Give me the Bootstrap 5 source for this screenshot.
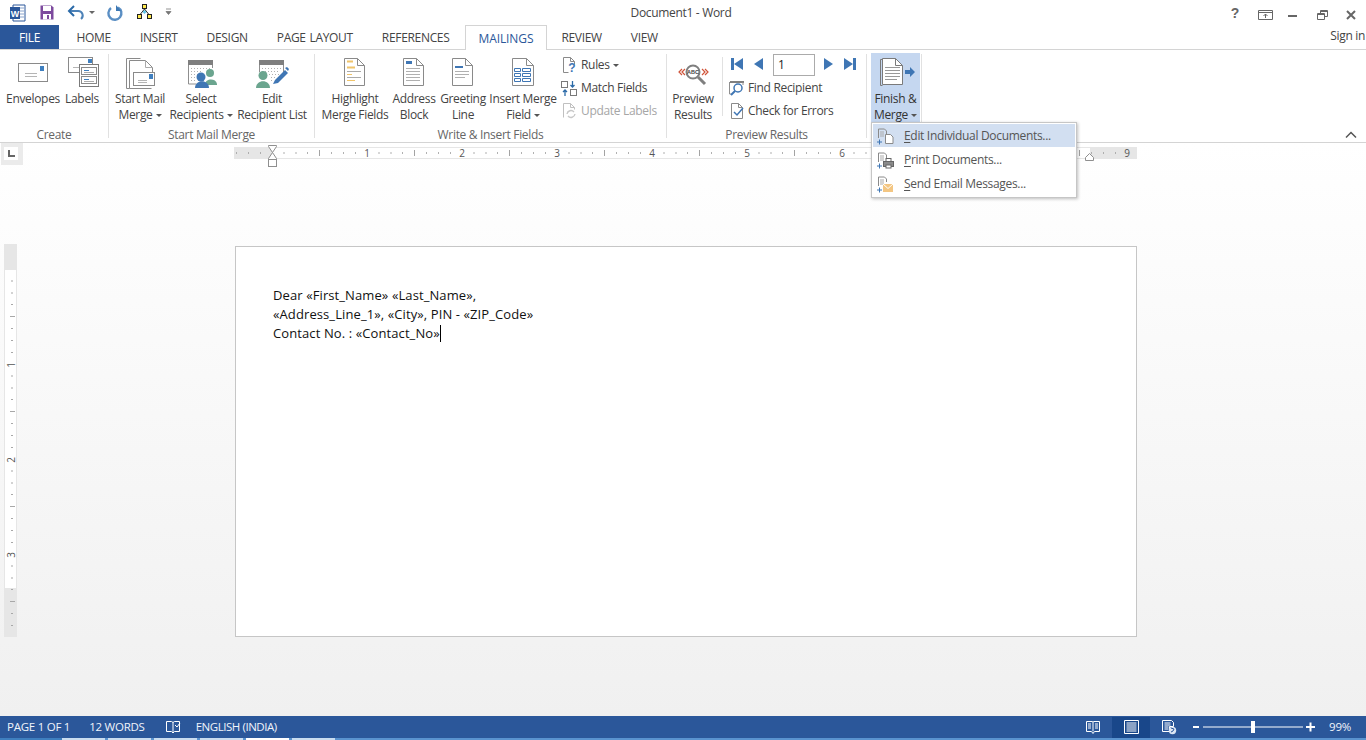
<!DOCTYPE html>
<html lang="en"><head><meta charset="utf-8"><title>Document1 - Word</title>
<link href="https://cdn.jsdelivr.net/npm/bootstrap@5.3.0/dist/css/bootstrap.min.css" rel="stylesheet">
<style>
html,body{height:740px;overflow:hidden;background:#fff}
body{font-family:"Open Sans","Liberation Sans",sans-serif;font-size:12px;letter-spacing:-.32px;color:#444;line-height:16px}
svg{display:block;flex:none;letter-spacing:0}
.wd-app{height:740px}
.wd-title{height:25px;flex:none}
.wd-side{flex:1 1 0}
.wd-qat{padding-left:9px;gap:0}
.wd-ctrl{padding-right:1px;justify-content:flex-end}
.wd-doctitle{padding-right:12px}
.wd-tabs{height:25px;flex:none;border-bottom:1px solid #d4d4d4;flex-wrap:nowrap}
.wd-tabs .nav-link{padding:0 14.5px;height:25px;line-height:25px;color:#444;font-size:12px;border:0;white-space:nowrap;word-spacing:1px}
.wd-tabs .wd-file{background:#2b579a;color:#fff;width:59px;padding:0;text-align:center;height:24px;border:0;margin-right:3px}
.wd-tabs .active{background:#fff;color:#2b579a;border:1px solid #d4d4d4;border-bottom:0;height:25px;padding:0 12.5px;margin-left:1px;letter-spacing:-.1px}
.wd-sign{margin-left:auto;line-height:21px;padding-right:1px;align-self:flex-start}
.wd-ribbon{height:93px;flex:none;border-bottom:1px solid #d4d4d4;position:relative;padding-top:3px}
.wd-grp{height:85px;flex:none;display:flex;flex-direction:column;position:relative}
.wd-grp::after{content:"";position:absolute;right:0;top:1px;bottom:0;width:1px;background:#e1e1e1}
.wd-gbody{height:70px;flex:none;display:flex}
.wd-glabel{text-align:center;color:#666;line-height:16px;margin-top:3.5px;padding-right:1px}
.g1{width:109px;padding-left:4px}.g1 .wd-glabel{margin-left:-4px}
.g2{width:206px}.g3{width:352px}.g4{width:200px}.g5{width:55px}
.wd-big{display:flex;flex:none;flex-direction:column;align-items:center;text-align:center;white-space:nowrap;color:#444;border:0;background:none;padding:0;letter-spacing:-.32px;font-size:12px;line-height:16px}
.wb40{width:40px}.wb44{width:44px}.wb52{width:52px}.wb54{width:54px}.wb56{width:56px}.wb58{width:58px}.wb66{width:66px}.wb74{width:74px}.wb76{width:76px}
.wd-pl3{padding-left:3px}
.wd-cr{display:inline-block;width:0;height:0;border:3px solid transparent;border-top-color:#555;border-bottom:0;vertical-align:2px;margin-left:3px}
.wd-small{display:flex;flex-direction:column;margin-left:5px}
.wd-small.wd-nomg{margin-left:0}
.wd-srow{height:23px;display:flex;align-items:center;gap:3px;white-space:nowrap}
.wd-off{color:#a6a6a6}
.wd-vsep{width:1px;height:59px;background:#e1e1e1;margin:4px 4px 0 3px;flex:none}
.wd-navrow{height:23px;display:flex;align-items:center}
.wd-inp{width:42px;height:22px;border:1px solid #ababab;color:#222;padding:0 4px;line-height:20px;margin:0 9px 0 2px;font-size:12px}
.wd-finish{margin-left:4px;width:49px;height:69px;background:#c5d7f0;color:#333}
.wd-menu{position:absolute;left:871px;top:72px;width:206px;height:76px;min-width:0;padding:1px;border:1px solid #c6c6c6;border-radius:0;box-shadow:1px 1px 3px rgba(0,0,0,.25);background:#fff;margin:0;font-size:12px;z-index:5}
.wd-menu .dropdown-item{height:24px;padding:0 0 0 3px;display:flex;align-items:center;gap:10px;color:#555;font-size:12px;line-height:16px;background:none}
.wd-menu .dropdown-item.active{background:#d2dff1;color:#555;height:23px;margin-bottom:1px}
.wd-menu u{text-underline-offset:2px}
.wd-collapse{position:absolute;right:9px;bottom:3px}
.wd-work{flex:1 1 0;min-height:0;background:linear-gradient(#fff 0,#fcfcfc 120px,#f0f0f0 100%);display:flex;flex-direction:column}
.wd-hr{height:24px;flex:none;display:flex}
.wd-corner{width:22px;height:22px;background:#ebebeb;margin-left:1px;padding:4px 5px 5px 3px;flex:none}
.wd-corner div{width:14px;height:13px;background:#fff;display:flex;align-items:center;justify-content:center}
.wd-hrbar{margin-left:211px}
.wd-docrow{display:flex;padding-top:79px}
.wd-vr{margin:-2px 0 0 4px;flex:none}
.wd-page{width:902px;height:391px;margin-left:217px;background:#fff;border:1px solid #c6c6c6;padding:39px 0 0 37px;font-size:13px;line-height:19px;color:#111;letter-spacing:.1px}
.wd-page p{margin:0}
.wd-caret{display:inline-block;width:1px;height:17px;background:#000;vertical-align:-4px;margin-left:0}
.wd-status{height:22px;flex:none;background:#2b579a;color:#f0f4fa;font-size:11.5px;letter-spacing:-.25px;padding-left:7px}
.wd-st{white-space:nowrap}
.wd-lang{letter-spacing:-.45px}
.wd-m19{margin-left:19px}.wd-m20{margin-left:20px}.wd-m15{margin-left:15px}.wd-mx14{margin:0 15px 0 14px}
.wd-pview{width:38px;height:21px;background:#19478a;display:flex;align-items:center;justify-content:center;margin:0 12px 0 12px}
.wd-strip{height:2px;flex:none;display:flex;background:#5a93cf}
.wd-strip i{display:block;width:43px;margin-right:3px;background:#c9dcef}
.wd-strip i.wd-w{background:#fff}
.wd-strip b{display:block;width:62px;background:#3f7fbf}
</style></head><body>
<div class="wd-app d-flex flex-column">
 <div class="wd-title d-flex align-items-center">
  <div class="wd-side d-flex align-items-center wd-qat">
   <svg width="175" height="24" viewBox="9 0 175 24"><path d="M13 4h12v16H13z" fill="#fff" stroke="#2b579a"/><path d="M19 7h5M19 10h5M19 13h5M19 16h5" stroke="#8aa4cc"/><rect x="10" y="6" width="10" height="12" fill="#2b579a"/><text x="15" y="15.5" font-family="Liberation Sans" font-size="9" font-weight="700" fill="#fff" text-anchor="middle">W</text>
    <path d="M40.500 4.500h11l2 2v12h-13z" fill="#7d4a9e"/><rect x="43" y="5" width="8" height="5" fill="#fff"/><rect x="43" y="13" width="8" height="5.500" fill="#fff"/><rect x="47" y="14" width="2" height="4" fill="#7d4a9e"/>
    <path d="M70 10h8a4.500 4.500 0 0 1 3 8" fill="none" stroke="#4d82b8" stroke-width="2"/><path d="M74 5l-5 5 5 5" fill="none" stroke="#2b6aa8" stroke-width="2"/><path d="M89 10h6l-3 3z" fill="#666"/>
    <path d="M111 7a6.500 6.500 0 1 0 7-.5" fill="none" stroke="#5b8fc4" stroke-width="2.400"/><path d="M116 4v6h5z" fill="#3d78b4"/>
    <g stroke="#222" fill="#ffe94d"><rect x="142.500" y="3.500" width="4" height="4"/><rect x="137.500" y="13.500" width="4" height="4"/><rect x="147.500" y="13.500" width="4" height="4"/></g><path d="M144.500 8l-4 5M144.500 8l4 5" stroke="#222" fill="none"/><path d="M144.500 9l2 2-2 2-2-2z" fill="#5fc4e8"/>
    <path d="M166 8h5M166 10.500h5l-2.500 3z" fill="#777" stroke="#777" stroke-width=".8"/></svg>
  </div>
  <div class="wd-doctitle">Document1 - Word</div>
  <div class="wd-side d-flex align-items-center wd-ctrl">
   <svg width="140" height="20" viewBox="1225 0 140 20"><text x="1235" y="15" font-family="Liberation Sans" font-size="14" font-weight="700" fill="#666" text-anchor="middle">?</text>
    <path d="M1258.500 7.500h14v9h-14z M1258.500 9.500h14" fill="none" stroke="#666"/><path d="M1265.500 15v-4M1263.500 13l2-2 2 2" fill="none" stroke="#666"/>
    <rect x="1288" y="12" width="9" height="2" fill="#666"/>
    <path d="M1317.500 10.500h7v6h-7z M1320.500 10v-2.500h7v6h-3M1317.500 11.500h7M1320.500 8.500h7" fill="none" stroke="#666"/>
    <path d="M1347 8l8 8M1355 8l-8 8" stroke="#666" stroke-width="2"/></svg>
  </div>
 </div>
 <ul class="nav wd-tabs">
  <li class="nav-item"><a class="nav-link wd-file" href="#">FILE</a></li>
  <li class="nav-item"><a class="nav-link" href="#">HOME</a></li>
  <li class="nav-item"><a class="nav-link" href="#">INSERT</a></li>
  <li class="nav-item"><a class="nav-link" href="#">DESIGN</a></li>
  <li class="nav-item"><a class="nav-link" href="#">PAGE LAYOUT</a></li>
  <li class="nav-item"><a class="nav-link" href="#">REFERENCES</a></li>
  <li class="nav-item"><a class="nav-link active" href="#">MAILINGS</a></li>
  <li class="nav-item"><a class="nav-link" href="#">REVIEW</a></li>
  <li class="nav-item"><a class="nav-link" href="#">VIEW</a></li>
  <li class="wd-sign">Sign in</li>
 </ul>
 <div class="wd-ribbon d-flex">
  <div class="wd-grp g1"><div class="wd-gbody">
    <button class="wd-big wb58"><svg width="44" height="38" viewBox="0 0 44 38"><rect x="7.500" y="10.500" width="29" height="18" fill="#fff" stroke="#8a8a8a"/><rect x="29" y="13" width="4" height="5" fill="#3f7fbf"/><path d="M14 20.500h12M14 23.500h12" stroke="#b5b5b5"/></svg>Envelopes</button>
    <button class="wd-big wb40"><svg width="44" height="38" viewBox="0 0 44 38"><rect x="8.500" y="4.500" width="24" height="15" fill="#fff" stroke="#8a8a8a"/><rect x="28" y="6" width="4" height="4" fill="#3f7fbf"/><path d="M13 14.500h6" stroke="#b5b5b5"/><rect x="19.500" y="11.500" width="19" height="22" fill="#fff" stroke="#7a7a7a"/><rect x="21.500" y="14.500" width="15" height="7" fill="#fff" stroke="#8a8a8a"/><rect x="21.500" y="23.500" width="15" height="7" fill="#fff" stroke="#8a8a8a"/><path d="M24 17.500h5M24 26.500h5" stroke="#3f7fbf"/><path d="M24 19.500h10M24 28.500h10" stroke="#aaa"/></svg>Labels</button>
   </div><div class="wd-glabel">Create</div></div>
  <div class="wd-grp g2"><div class="wd-gbody wd-pl3">
    <button class="wd-big wb56"><svg width="44" height="38" viewBox="0 0 44 38"><path d="M11.500 35.500h-3v-30h14" fill="none" stroke="#8a8a8a"/><path d="M11.500 35.500v-28h16l7 7v5M11.500 35.500h22" fill="none" stroke="#8a8a8a"/><path d="M27.500 7.500v7h7" fill="none" stroke="#aaa"/><rect x="15.500" y="19.500" width="21" height="13" fill="#fff" stroke="#8a8a8a"/><rect x="31" y="21" width="4" height="5" fill="#3f7fbf"/><path d="M20 27.500h9M20 29.500h9" stroke="#b5b5b5"/></svg>Start Mail<span>Merge<i class="wd-cr"></i></span></button>
    <button class="wd-big wb66"><svg width="44" height="38" viewBox="0 0 44 38"><rect x="9" y="7" width="25" height="5" fill="#7f7f7f"/><path d="M9.500 12v19h8M33.500 12v3" fill="none" stroke="#8f8f8f"/><path d="M12 15.500h20M12 18.500h12M12 21.500h12M12 24.500h6M12 27.500h6" stroke="#b0b0b0" stroke-dasharray="1 2"/><circle cx="31" cy="20" r="4" fill="#6ba58f"/><path d="M26 32c0-7 11-7 12-1v1z" fill="#6ba58f"/><circle cx="22" cy="24" r="4.500" fill="#3f76b4"/><path d="M16 35c0-9 14-9 14 0z" fill="#3f76b4"/></svg>Select<span>Recipients<i class="wd-cr"></i></span></button>
    <button class="wd-big wb76"><svg width="44" height="38" viewBox="0 0 44 38"><rect x="9" y="7" width="25" height="5" fill="#7f7f7f"/><path d="M9.500 12v7M33.500 12v8" fill="none" stroke="#8f8f8f"/><path d="M12 15.500h20M12 18.500h18M19 21.500h11M21 24.500h6M21 27.500h3" stroke="#b0b0b0" stroke-dasharray="1 2"/><circle cx="13" cy="22.500" r="4.500" fill="#6ba58f"/><path d="M6 35c0-9 14-9 14 0z" fill="#6ba58f"/><path d="M23 31l2-4 10-10 3 3-10 10z" fill="#3f76b4"/><path d="M35 15l2-1 2 2-1 2z" fill="#3f76b4"/></svg>Edit<span>Recipient List</span></button>
   </div><div class="wd-glabel">Start Mail Merge</div></div>
  <div class="wd-grp g3"><div class="wd-gbody wd-pl3">
    <button class="wd-big wb74"><svg width="44" height="38" viewBox="0 0 44 38"><path d="M11.500 32.500v-27h13l7 7v20z" fill="#fff" stroke="#8a8a8a"/><path d="M24.500 5.500v7h7" fill="none" stroke="#8a8a8a"/><path d="M14 8.500h6M14 14.500h8" stroke="#f0c46a" stroke-width="2"/><path d="M14 18.500h14M14 24.500h14" stroke="#aaa"/><path d="M14 21.500h5M14 27.500h8" stroke="#f0c46a" stroke-width="1"/></svg>Highlight<span>Merge Fields</span></button>
    <button class="wd-big wb44"><svg width="44" height="38" viewBox="0 0 44 38"><path d="M11.500 32.500v-27h13l7 7v20z" fill="#fff" stroke="#8a8a8a"/><path d="M24.500 5.500v7h7" fill="none" stroke="#8a8a8a"/><rect x="14" y="8" width="6" height="3" fill="#3f76b4"/><path d="M14 15.500h14M14 18.500h14M14 21.500h14M14 24.500h14M14 27.500h14" stroke="#b0b0b0"/></svg>Address<span>Block</span></button>
    <button class="wd-big wb54"><svg width="44" height="38" viewBox="0 0 44 38"><path d="M11.500 32.500v-27h13l7 7v20z" fill="#fff" stroke="#8a8a8a"/><path d="M24.500 5.500v7h7" fill="none" stroke="#8a8a8a"/><rect x="14" y="13" width="8" height="2" fill="#3f76b4"/><path d="M14 18.500h14M14 21.500h14M14 24.500h10" stroke="#b0b0b0"/></svg>Greeting<span>Line</span></button>
    <button class="wd-big wb66"><svg width="44" height="38" viewBox="0 0 44 38"><path d="M11.500 32.500v-27h14l7 7v20z" fill="#fff" stroke="#8a8a8a"/><path d="M25.500 5.500v7h7" fill="none" stroke="#8a8a8a"/><path d="M13.500 15.500h6v3h-6zM21.500 15.500h8v3h-8zM13.500 20.500h6v3h-6zM21.500 20.500h8v3h-8zM13.500 25.500h6v3h-6zM21.500 25.500h8v3h-8z" fill="none" stroke="#3f76b4"/></svg>Insert Merge<span>Field<i class="wd-cr"></i></span></button>
    <div class="wd-small">
     <div class="wd-srow"><svg width="17" height="18" viewBox="0 0 17 18"><path d="M2.500 16.500v-15h7l4 4v3M2.500 16.500h5" fill="none" stroke="#8a8a8a"/><path d="M9.500 1.500v4h4" fill="none" stroke="#8a8a8a"/><text x="11" y="16" font-family="Liberation Sans" font-weight="700" font-size="12" fill="#3f76b4" text-anchor="middle">?</text></svg><span>Rules<i class="wd-cr"></i></span></div>
     <div class="wd-srow"><svg width="17" height="18" viewBox="0 0 17 18"><rect x=".5" y="2.500" width="6" height="6" fill="#fff" stroke="#7a7a7a"/><rect x="9.500" y="10.500" width="6" height="6" fill="#fff" stroke="#7a7a7a"/><path d="M11.500 2v6M9.500 6l2 2 2-2M4 11v6M2 13l2-2 2 2" fill="none" stroke="#2b6aa8" stroke-width="1.300"/></svg>Match Fields</div>
     <div class="wd-srow wd-off"><svg width="17" height="18" viewBox="0 0 17 18"><path d="M2.500 15.500v-14h7l4 4v2M9.500 1.500v4h4" fill="none" stroke="#c0c0c0"/><path d="M6 12a4 4 0 0 1 7-2M14 12a4 4 0 0 1-7 2" fill="none" stroke="#c8c8c8" stroke-width="1.400"/></svg>Update Labels</div>
    </div>
   </div><div class="wd-glabel">Write &amp; Insert Fields</div></div>
  <div class="wd-grp g4"><div class="wd-gbody">
    <button class="wd-big wb52"><svg width="44" height="38" viewBox="0 0 44 38"><circle cx="22" cy="19" r="6.500" fill="#fff" stroke="#7f7f7f" stroke-width="2"/><path d="M27 24l7 7" stroke="#7f7f7f" stroke-width="3"/><text x="22" y="21" font-family="Liberation Sans" font-size="5.500" font-weight="700" fill="#444" text-anchor="middle">ABC</text><path d="M11 16l-3 3 3 3M14 16l-3 3 3 3M31 16l3 3-3 3M34 16l3 3-3 3" fill="none" stroke="#d0543a" stroke-width="1.200"/></svg>Preview<span>Results</span></button>
    <div class="wd-vsep"></div>
    <div class="wd-small wd-nomg">
     <div class="wd-navrow"><svg width="44" height="23" viewBox="0 0 44 23"><rect x="4" y="5" width="3" height="12" fill="#3f76b4"/><path d="M7 11l9-6v12z" fill="#3f76b4"/><path d="M27 11l9-6v12z" fill="#3f76b4"/></svg><div class="wd-inp">1</div><svg width="44" height="23" viewBox="0 0 44 23"><path d="M0 5l9 6-9 6z" fill="#3f76b4"/><path d="M20 5l9 6-9 6z" fill="#3f76b4"/><rect x="29" y="5" width="3" height="12" fill="#3f76b4"/></svg></div>
     <div class="wd-srow"><svg width="18" height="18" viewBox="0 0 18 18"><path d="M3 3h14" stroke="#7f7f7f" stroke-width="2"/><path d="M2.500 3v12h2M16 3v3" fill="none" stroke="#8f8f8f"/><circle cx="11" cy="9" r="4" fill="#fff" stroke="#3f76b4" stroke-width="1.500"/><path d="M8 12l-4 4" stroke="#3f76b4" stroke-width="2"/></svg>Find Recipient</div>
     <div class="wd-srow"><svg width="18" height="18" viewBox="0 0 18 18"><path d="M4.500 16.500v-15h7l4 4v11z" fill="#fff" stroke="#8a8a8a"/><path d="M11.500 1.500v4h4" fill="none" stroke="#8a8a8a"/><path d="M7 10l3 3 6-7" fill="none" stroke="#3f76b4" stroke-width="1.500"/></svg>Check for Errors</div>
    </div>
   </div><div class="wd-glabel">Preview Results</div></div>
  <div class="wd-grp g5"><div class="wd-gbody">
    <button class="wd-big wd-finish"><svg width="44" height="38" viewBox="0 0 44 38"><path d="M8.500 32.500h-2v-26h2" fill="none" stroke="#7a7a7a"/><path d="M8.500 31.500v-26h13l7 7v19z" fill="#fff" stroke="#7a7a7a"/><path d="M21.500 5.500v7h7" fill="none" stroke="#7a7a7a"/><path d="M11 14.500h15M11 17.500h15M11 20.500h15M11 23.500h15M11 26.500h12" stroke="#999"/><path d="M31 17h5v-3l5 5-5 5v-3h-5z" fill="#3f76b4"/></svg>Finish &amp;<span>Merge<i class="wd-cr"></i></span></button>
   </div></div>
  <svg class="wd-collapse" width="12" height="8" viewBox="0 0 12 8"><path d="M1 6.500l5-5 5 5" fill="none" stroke="#555" stroke-width="1.500"/></svg>
  <ul class="dropdown-menu show wd-menu">
   <li><a class="dropdown-item active" href="#"><svg width="18" height="18" viewBox="0 0 18 18"><path d="M2.500 11v-9h6l2 2v3" fill="none" stroke="#8a8a8a"/><path d="M4 5h4M4 7h4M4 9h4" stroke="#aaa"/><path d="M9.500 16.500v-9h5l2.500 2.500v6.500z" fill="#fff" stroke="#8a8a8a"/><path d="M1 15h5M3.500 12.500v5" stroke="#3f76b4"/></svg><span><u>E</u>dit Individual Documents...</span></a></li>
   <li><a class="dropdown-item" href="#"><svg width="18" height="18" viewBox="0 0 18 18"><path d="M2.500 11v-9h6l2 2v3" fill="none" stroke="#8a8a8a"/><path d="M4 5h4M4 7h4M4 9h4" stroke="#aaa"/><rect x="7.500" y="10.500" width="10" height="5" fill="#8a8a8a" stroke="#666"/><rect x="10" y="7.500" width="5" height="3" fill="#fff" stroke="#666"/><rect x="10" y="14" width="5" height="3" fill="#fff" stroke="#666"/><path d="M1 15h5M3.500 12.500v5" stroke="#3f76b4"/></svg><span><u>P</u>rint Documents...</span></a></li>
   <li><a class="dropdown-item" href="#"><svg width="18" height="18" viewBox="0 0 18 18"><path d="M2.500 11v-9h6l2 2v3" fill="none" stroke="#8a8a8a"/><path d="M4 5h4M4 7h4M4 9h4" stroke="#aaa"/><rect x="7" y="9" width="10" height="8" fill="#f3c683"/><path d="M7 9l5 4.500 5-4.500" fill="none" stroke="#fff"/><path d="M1 15h5M3.500 12.500v5" stroke="#3f76b4"/></svg><span><u>S</u>end Email Messages...</span></a></li>
  </ul>
 </div>
 <div class="wd-work">
  <div class="wd-hr">
   <div class="wd-corner"><div><svg width="7" height="7" viewBox="0 0 7 7"><path d="M1 0v6h6" fill="none" stroke="#666" stroke-width="2"/></svg></div></div>
   <svg class="wd-hrbar" width="905" height="24" viewBox="234 143 905 24">
    <defs><pattern id="htick" x="272" y="147" width="95" height="12" patternUnits="userSpaceOnUse">
      <g fill="#a8a8a8"><rect x="11.500" y="5" width="1" height="2"/><rect x="23.500" y="5" width="1" height="2"/><rect x="35" y="5" width="1" height="2"/><rect x="47" y="3" width="1" height="6" fill="#999"/><rect x="59" y="5" width="1" height="2"/><rect x="71" y="5" width="1" height="2"/><rect x="83" y="5" width="1" height="2"/></g></pattern></defs>
    <rect x="234" y="147" width="903" height="12" fill="#e6e6e6"/>
    <rect x="272" y="148" width="818" height="10" fill="#fff"/>
    <rect x="234" y="147" width="903" height="12" fill="url(#htick)" opacity=".9"/>
    <g font-family="Open Sans,Liberation Sans" font-size="10" fill="#555" text-anchor="middle"><text x="367" y="157">1</text><text x="462" y="157">2</text><text x="557" y="157">3</text><text x="652" y="157">4</text><text x="747" y="157">5</text><text x="842" y="157">6</text><text x="1127" y="157">9</text></g>
    <path d="M268.500 145.500h8v1l-4 6 4 6v1h-8v-1l4-6-4-6z" fill="#fff" stroke="#8f8f8f"/><rect x="268.500" y="159.500" width="8" height="7" fill="#fff" stroke="#8f8f8f"/>
    <path d="M1085.500 160.500v-3l4-4 4 4v3z" fill="#fff" stroke="#8f8f8f"/>
   </svg>
  </div>
  <div class="wd-docrow">
   <svg class="wd-vr" width="14" height="394" viewBox="4 244 14 394">
    <defs><pattern id="vtick" x="4" y="269" width="14" height="95" patternUnits="userSpaceOnUse"><g fill="#a8a8a8"><rect x="7" y="11.500" width="2" height="1"/><rect x="7" y="23.500" width="2" height="1"/><rect x="7" y="35" width="2" height="1"/><rect x="6" y="47" width="5" height="1"/><rect x="7" y="59" width="2" height="1"/><rect x="7" y="71" width="2" height="1"/><rect x="7" y="83" width="2" height="1"/></g></pattern></defs>
    <rect x="4" y="244" width="13" height="393" fill="#e6e6e6"/><rect x="5" y="270" width="11" height="318" fill="#fff"/>
    <rect x="4" y="270" width="13" height="367" fill="url(#vtick)"/>
    <g font-family="Open Sans,Liberation Sans" font-size="10" fill="#555" text-anchor="middle"><text transform="translate(15 365) rotate(-90)">1</text><text transform="translate(15 460) rotate(-90)">2</text><text transform="translate(15 555) rotate(-90)">3</text></g>
   </svg>
   <div class="wd-page">
    <p>Dear «First_Name» «Last_Name»,</p>
    <p>«Address_Line_1», «City», PIN - «ZIP_Code»</p>
    <p>Contact No. : «Contact_No»<span class="wd-caret"></span></p>
   </div>
  </div>
 </div>
 <div class="wd-status d-flex align-items-center">
  <span class="wd-st">PAGE 1 OF 1</span><span class="wd-st wd-m19">12 WORDS</span>
  <svg class="wd-m20" width="16" height="16" viewBox="0 0 16 16"><path d="M1.500 2.500h5l1.500 1 1.500-1h5v10h-5l-1.500 1.500-1.500-1.500h-5zM8 3.500v10" fill="none" stroke="#fff"/><path d="M10 6l2 2 3-4" fill="none" stroke="#fff"/></svg>
  <span class="wd-st wd-m15 wd-lang">ENGLISH (INDIA)</span>
  <div class="ms-auto d-flex align-items-center">
   <svg width="14" height="14" viewBox="0 0 14 14"><path d="M.5 1.500h6l.5 1 .5-1h6v10h-5l-1.500 2-1.500-2h-5zM7 2.500v9" fill="none" stroke="#fff"/><path d="M2 4h3M2 6h3M2 8h3M9 4h3M9 6h3M9 8h3" stroke="#fff"/></svg>
   <div class="wd-pview"><svg width="15" height="14" viewBox="0 0 15 14"><path d="M.5.500h14v13H.5z" fill="none" stroke="#fff"/><path d="M2.500 3h10M2.500 5h10M2.500 7h10M2.500 9h10M2.500 11h10" stroke="#fff"/></svg></div>
   <svg width="15" height="15" viewBox="0 0 15 15"><path d="M.5.500h9l2 2v4h-4v5h-7z" fill="none" stroke="#fff"/><path d="M2.500 3h6M2.500 5h6M2.500 7h4M2.500 9h4" stroke="#fff"/><circle cx="10.500" cy="10.500" r="3.700" fill="#dce6f4"/><path d="M9 8l3 1-1 2-2 1" fill="none" stroke="#2b579a"/></svg>
   <svg class="ms-3" width="122" height="14" viewBox="0 0 122 14"><rect y="6" width="6" height="2" fill="#fff"/><rect x="10" y="6.500" width="100" height="1" fill="#fff"/><rect x="58" y="1" width="4" height="12" fill="#fff"/><path d="M113 7h9M117.500 2.500v9" stroke="#fff" stroke-width="2"/></svg>
   <span class="wd-st wd-mx14">99%</span>
  </div>
 </div>
 <div class="wd-strip"><b></b><i></i><i></i><i></i><i></i><i class="wd-w"></i><i></i></div>
</div>
</body></html>
